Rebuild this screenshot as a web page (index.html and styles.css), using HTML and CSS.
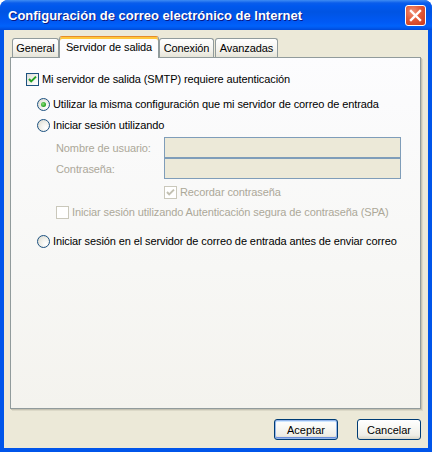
FILE: index.html
```html
<!DOCTYPE html>
<html lang="es">
<head>
<meta charset="utf-8">
<title>Configuración de correo electrónico de Internet</title>
<link rel="stylesheet" href="styles.css">
</head>
<body>
<div class="window">
  <div class="titlebar">
    <span class="title">Configuración de correo electrónico de Internet</span>
    <span class="close" aria-label="Cerrar">
      <svg width="13" height="13" viewBox="0 0 13 13"><path d="M2 2 L11 11 M11 2 L2 11" stroke="#fff" stroke-width="2.4" stroke-linecap="square"/></svg>
    </span>
  </div>
  <div class="client">
    <div class="tabs">
      <div class="tab tab-general">General</div>
      <div class="tab tab-active">Servidor de salida</div>
      <div class="tab tab-conexion">Conexión</div>
      <div class="tab tab-avanzadas">Avanzadas</div>
    </div>
    <div class="panel">
      <div class="row row-auth">
        <span class="check"><svg width="11" height="11" viewBox="0 0 11 11"><path d="M2 5 L4.2 7.4 L9 2.6" fill="none" stroke="#21A121" stroke-width="2"/></svg></span>
        <span class="label">Mi servidor de salida (SMTP) requiere autenticación</span>
      </div>
      <div class="row row-same">
        <span class="radio selected"><span class="dot"></span></span>
        <span class="label">Utilizar la misma configuración que mi servidor de correo de entrada</span>
      </div>
      <div class="row row-login">
        <span class="radio"></span>
        <span class="label">Iniciar sesión utilizando</span>
      </div>
      <div class="field field-user">
        <span class="flabel">Nombre de usuario:</span>
        <span class="input"></span>
      </div>
      <div class="field field-pass">
        <span class="flabel">Contraseña:</span>
        <span class="input"></span>
      </div>
      <div class="row row-remember">
        <span class="check disabled"><svg width="11" height="11" viewBox="0 0 11 11"><path d="M2 5 L4.2 7.4 L9 2.6" fill="none" stroke="#C2C0B2" stroke-width="2"/></svg></span>
        <span class="label dis">Recordar contraseña</span>
      </div>
      <div class="row row-spa">
        <span class="check disabled"></span>
        <span class="label dis">Iniciar sesión utilizando Autenticación segura de contraseña (SPA)</span>
      </div>
      <div class="row row-before">
        <span class="radio"></span>
        <span class="label">Iniciar sesión en el servidor de correo de entrada antes de enviar correo</span>
      </div>
    </div>
    <div class="buttons">
      <button class="btn default">Aceptar</button>
      <button class="btn">Cancelar</button>
    </div>
  </div>
</div>
</body>
</html>
```
FILE: styles.css
```css
html, body {
  margin: 0;
  padding: 0;
  background: #ffffff;
}
body {
  font-family: "Liberation Sans", Arial, sans-serif;
  font-size: 11px;
  letter-spacing: -0.1px;
  color: #000;
}
.window {
  width: 432px;
  height: 452px;
  display: flex;
  flex-direction: column;
  box-sizing: border-box;
  background: #0055EA;
  border-radius: 8px 8px 0 0;
  overflow: hidden;
}
.titlebar {
  height: 30px;
  flex: none;
  display: flex;
  align-items: center;
  justify-content: space-between;
  padding: 0 6px 0 8px;
  background: linear-gradient(180deg, #3F8CF3 0px, #0A5DEB 3px, #0058EE 6px, #0054E3 12px, #0059F5 22px, #0062FB 26px, #0058EE 28px, #0049D6 30px);
  box-sizing: border-box;
}
.title {
  color: #fff;
  font-weight: bold;
  font-size: 13px;
  letter-spacing: 0;
  text-shadow: 1px 1px 0 #0A1883;
  white-space: nowrap;
}
.close {
  width: 21px;
  height: 21px;
  box-sizing: border-box;
  border: 1px solid #fff;
  border-radius: 3px;
  background: radial-gradient(circle at 35% 30%, #F0937A 0%, #E25A38 45%, #C8381A 100%);
  display: flex;
  align-items: center;
  justify-content: center;
  margin-top: 1px;
}
.client {
  flex: 1;
  margin: 0 4px 4px 4px;
  background: #ECE9D8;
  padding: 6px 7px 8px 6px;
  display: flex;
  flex-direction: column;
}
.tabs {
  height: 21px;
  display: flex;
  align-items: flex-end;
  padding-left: 2px;
  flex: none;
}
.tab {
  height: 19px;
  box-sizing: border-box;
  border: 1px solid #919B9C;
  border-bottom: none;
  border-radius: 3px 3px 0 0;
  background: linear-gradient(180deg, #FFFFFF 0%, #F4F3EE 60%, #E6E4D8 100%);
  padding: 0;
  text-align: center;
  line-height: 18px;
  white-space: nowrap;
}
.tab-general { width: 47px; }
.tab-conexion { width: 55px; }
.tab-avanzadas { width: 63px; margin-left: 1px; }
.tab-active {
  width: 100px;
  height: 22px;
  margin-bottom: -1px;
  background: #FCFCFE;
  border-color: #919B9C;
  border-top: 1px solid #E68B2C;
  box-shadow: inset 0 2px 0 #FFC73C;
  line-height: 19px;
  padding-top: 1px;
  position: relative;
  z-index: 1;
}
.panel {
  height: 352px;
  flex: none;
  box-sizing: border-box;
  border: 1px solid #919B9C;
  box-shadow: 1px 1px 0 #C5C2B2, 2px 2px 0 #DCD9C8;
  background: linear-gradient(180deg, #FCFCFE 0%, #F7F7F5 60%, #F4F3EE 100%);
  display: flex;
  flex-direction: column;
  padding: 14px 0 0 0;
}
.row {
  height: 14px;
  display: flex;
  align-items: center;
}
.row-auth { padding-left: 15px; }
.row-same { padding-left: 26px; margin-top: 11px; }
.row-login { padding-left: 26px; margin-top: 7px; }
.row-remember { padding-left: 153px; margin-top: 6px; }
.row-spa { padding-left: 45px; margin-top: 6px; }
.row-before { padding-left: 26px; margin-top: 15px; }
.label {
  margin-left: 3px;
  white-space: nowrap;
  line-height: 14px;
}
.label.dis { color: #ACA899; }
.check {
  width: 13px;
  height: 13px;
  box-sizing: border-box;
  border: 1px solid #1C5180;
  background: linear-gradient(135deg, #DCDCD7 0%, #F2F2EE 50%, #FFFFFF 100%);
  display: flex;
  align-items: center;
  justify-content: center;
  flex: none;
}
.check.disabled {
  border-color: #CAC8BB;
  background: #FFFFFF;
}
.radio {
  width: 13px;
  height: 13px;
  box-sizing: border-box;
  border: 1px solid #1C5180;
  border-radius: 50%;
  background: radial-gradient(circle at 70% 70%, #FFFFFF 0%, #F0F0EA 45%, #D4D4CC 100%);
  display: flex;
  align-items: center;
  justify-content: center;
  flex: none;
}
.dot {
  width: 5px;
  height: 5px;
  border-radius: 50%;
  background: radial-gradient(circle at 40% 40%, #8BE07A 0%, #2FA72A 60%, #1C8A1A 100%);
}
.field {
  display: flex;
  align-items: center;
  padding-left: 45px;
  height: 21px;
}
.field-user { margin-top: 5px; }
.field-pass { margin-top: 0px; }
.flabel {
  width: 108px;
  color: #ACA899;
  white-space: nowrap;
}
.input {
  width: 237px;
  height: 21px;
  box-sizing: border-box;
  border: 1px solid #7F9DB9;
  background: #ECE9D8;
}
.buttons {
  display: flex;
  justify-content: flex-end;
  gap: 19px;
  margin-top: 10px;
  padding-right: 0px;
}
.btn {
  width: 64px;
  height: 21px;
  box-sizing: border-box;
  border: 1px solid #003C74;
  border-radius: 3px;
  background: linear-gradient(180deg, #FFFFFF 0%, #F8F8F4 40%, #EFEEE7 80%, #D8D5C8 100%);
  font-family: "Liberation Sans", Arial, sans-serif;
  font-size: 11px;
  letter-spacing: 0;
  color: #000;
  padding: 0;
  margin: 0;
}
.btn.default {
  box-shadow: inset 0 0 0 1px #97B7EA, inset 0 -1px 0 1px #6B8FDC, inset 0 1px 0 1px #CEE7FF;
}
```
